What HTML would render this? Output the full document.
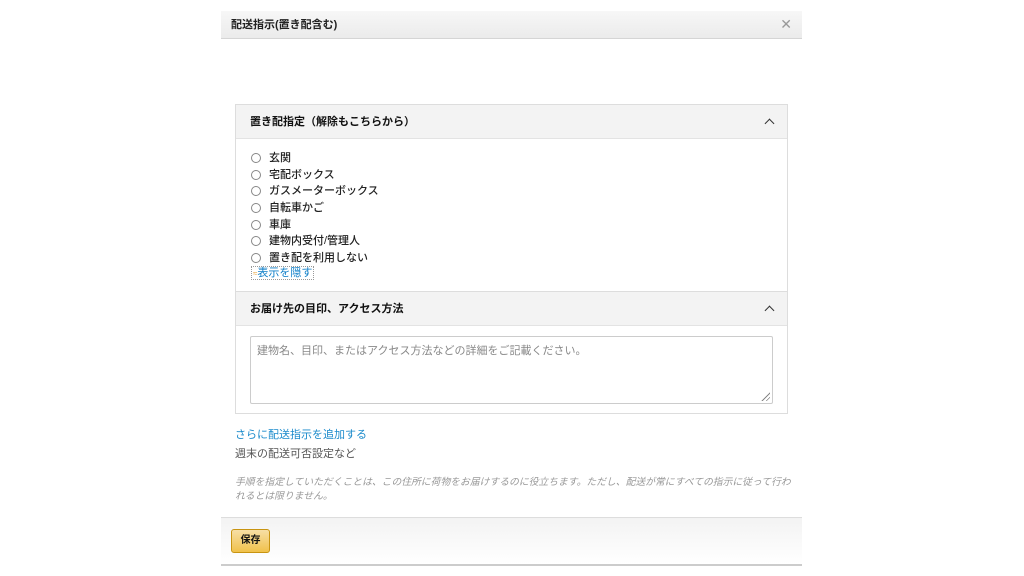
<!DOCTYPE html>
<html><head><meta charset="utf-8"><style>
*{margin:0;padding:0;box-sizing:border-box}
body{width:1024px;height:576px;background:#fff;font-family:"Liberation Sans","Noto Sans CJK JP",sans-serif;font-size:11px;color:#111;position:relative;overflow:hidden}
.modal{position:absolute;left:221px;top:11px;width:581px;height:555px;background:#fff;border-bottom:2px solid #ccc}
.hd{height:28px;background:linear-gradient(#f7f7f7,#ebebeb);border-bottom:1px solid #d5d5d5;font-weight:bold;font-size:11px;line-height:28px;padding-left:10px;color:#222}
.x{position:absolute;right:10px;top:0px;line-height:26px;font-size:14px;color:#999;font-weight:normal}
.box{position:absolute;left:14px;width:553px;border:1px solid #ddd}
.sh{height:34px;background:#f3f3f3;border-bottom:1px solid #e3e3e3;font-weight:bold;line-height:34px;padding-left:14px;position:relative}
.car{position:absolute;right:14px;top:15px;width:7px;height:7px;border-left:1.5px solid #333;border-top:1.5px solid #333;transform:rotate(45deg)}
.r{height:16.7px;line-height:16.7px;padding-left:18px;position:relative;font-weight:500;color:#222}
.r:before{content:"";position:absolute;left:0;top:3px;width:10px;height:10px;border:1px solid #888;border-radius:50%;box-sizing:border-box}
.ta{position:absolute;left:14px;top:10px;width:523px;height:68px;border:1px solid #ccc;border-radius:2px;color:#888;padding:5px 6px;font-size:11px}
.grip{position:absolute;right:2px;bottom:2px;width:10px;height:10px;background:repeating-linear-gradient(135deg,transparent 0 2px,#888 2px 3px);clip-path:polygon(100% 0,100% 100%,0 100%)}
.btn{position:absolute;left:10px;top:518px;width:39px;height:24px;border:1px solid #c89411;border-radius:3px;background:linear-gradient(#f7dfa5,#f0c14b);font-size:10px;line-height:22px;text-align:center;font-weight:bold}
</style></head><body>
<div class="modal">
<div class="hd">配送指示(置き配含む)<span class="x">✕</span></div>
<div class="box" style="top:93px;height:310px">
<div class="sh">置き配指定（解除もこちらから）<span class="car"></span></div>
<div style="padding:11px 0 0 15px">
<div class="r">玄関</div><div class="r">宅配ボックス</div><div class="r">ガスメーターボックス</div><div class="r">自転車かご</div><div class="r">車庫</div><div class="r">建物内受付/管理人</div><div class="r">置き配を利用しない</div>
<div style="line-height:13px;color:#0a7cc7"><span style="border:1px dotted #999;padding:0 1px"><span style="color:#e8a33a;font-size:8px">≈</span>表示を隠す</span></div>
</div>
<div style="position:absolute;top:186px;left:0;right:0;border-top:1px solid #ddd">
<div class="sh">お届け先の目印、アクセス方法<span class="car"></span></div>
<div style="position:relative;height:88px"><div class="ta">建物名、目印、またはアクセス方法などの詳細をご記載ください。<span class="grip"></span></div></div>
</div>
</div>
<div style="position:absolute;left:14px;top:415px;color:#1a8acb;font-size:11px">さらに配送指示を追加する</div>
<div style="position:absolute;left:14px;top:434px;color:#555;font-size:11px">週末の配送可否設定など</div>
<div style="position:absolute;left:14px;top:465px;white-space:nowrap;color:#999;font-style:italic;font-size:9.8px;line-height:14px">手順を指定していただくことは、この住所に荷物をお届けするのに役立ちます。ただし、配送が常にすべての指示に従って行わ<br>れるとは限りません。</div>
<div style="position:absolute;left:0;top:506px;width:581px;height:47px;border-top:1px solid #ddd;background:linear-gradient(#f3f3f3,#fff)"></div>
<div class="btn">保存</div>
</div>
</body></html>
